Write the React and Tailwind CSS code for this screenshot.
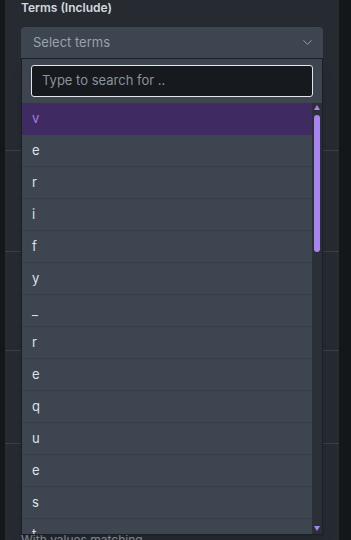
import { ChevronDown } from "lucide-react"

const terms = ["v", "e", "r", "i", "f", "y", "_", "r", "e", "q", "u", "e", "s", "t"]

export default function App() {
  return (
    <div className="h-[540px] w-[351px] overflow-hidden bg-[#14171a] font-['Inter',sans-serif]">
      <div className="relative ml-[5px] h-full w-[334px] bg-[#262b31] px-4">
        <p className="h-4 text-[12px] font-semibold leading-4 text-[#d5d9de]">Terms (Include)</p>
        <div className="mt-[11px] flex h-[31px] items-center justify-between rounded-t-[4px] bg-[#3d4650] pl-3 pr-2">
          <span className="text-[13px] text-[#9aa2ab]">Select terms</span>
          <ChevronDown size={15} strokeWidth={1.5} className="text-[#9aa2ab]" />
        </div>

        <div className="-mx-4 h-[93px] border-b border-[#3a4048]" />
        <div className="-mx-4 h-[101px] border-b border-[#3a4048]" />
        <div className="-mx-4 h-[99px] border-b border-[#3a4048]" />
        <div className="-mx-4 h-[93px] border-b border-[#3a4048]" />
        <p className="pt-[88px] text-[12px] leading-4 text-[#8b939c]">With values matching</p>

        <div className="absolute left-4 right-4 top-[58px] flex h-[477px] flex-col border border-[#1c2025] bg-[#3d4650] shadow-lg">
          <div className="px-[9px] pb-[6px] pt-[6px]">
            <div className="flex h-8 items-center rounded-[3px] border border-[#e4e6e9] bg-[#16191d] px-[10px]">
              <span className="text-[13px] text-[#8b939c]">Type to search for ..</span>
            </div>
          </div>
          <div className="flex min-h-0 flex-1">
            <div className="flex-1 overflow-hidden">
              {terms.map((t, i) => (
                <div
                  key={i}
                  className={
                    i === 0
                      ? "flex h-8 items-center border-b border-[#3f2a62] bg-[#3f2a62] pl-[10px] text-[13px] text-[#a57ae8]"
                      : "flex h-8 items-center border-b border-[#353c45] pl-[10px] text-[13px] text-[#dde1e5]"
                  }
                >
                  {t}
                </div>
              ))}
            </div>
            <div className="flex w-[10px] flex-col items-center bg-[#2b3036] pt-[2px] pb-[3px]">
              <svg width="6" height="5" viewBox="0 0 6 5">
                <path d="M3 0 L6 5 L0 5 Z" fill="#a884f0" />
              </svg>
              <div className="mt-[5px] h-[137px] w-[6px] rounded-[3px] bg-[#a884f0]" />
              <div className="flex-1" />
              <svg width="6" height="5" viewBox="0 0 6 5">
                <path d="M0 0 L6 0 L3 5 Z" fill="#a884f0" />
              </svg>
            </div>
          </div>
        </div>
      </div>
    </div>
  )
}
